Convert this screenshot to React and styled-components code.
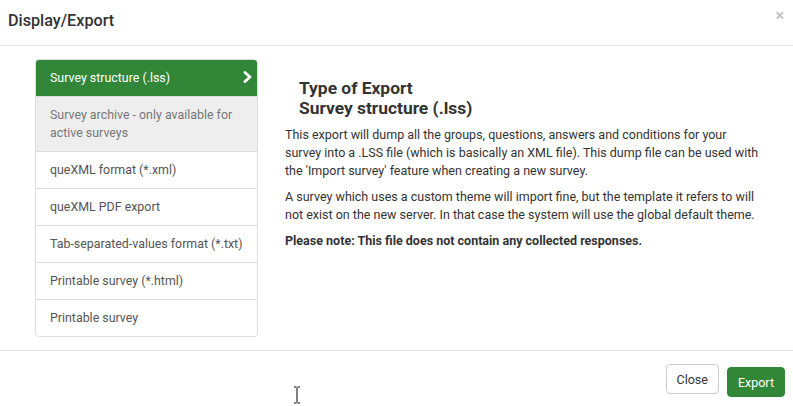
import React from "react";
import styled, { createGlobalStyle } from "styled-components";

const GlobalStyle = createGlobalStyle`
  html, body {
    margin: 0;
    padding: 0;
    background: #fff;
  }
  body {
    font-family: Roboto, "Liberation Sans", Arial, sans-serif;
    color: #333;
  }
`;

const Modal = styled.div`
  position: relative;
  width: 793px;
  height: 406px;
  overflow: hidden;
`;

const Header = styled.div`
  height: 46px;
  box-sizing: border-box;
  border-bottom: 1px solid #e5e5e5;
  display: flex;
  align-items: center;
  justify-content: space-between;
  padding: 0 9px 4px 8px;
`;

const Title = styled.h4`
  margin: 0;
  font-size: 16.2px;
  font-weight: 500;
  color: #333;
`;

const CloseX = styled.span`
  font-size: 16px;
  font-weight: 700;
  color: #c4c4c4;
  line-height: 1;
  margin-top: -9px;
`;

const Body = styled.div`
  display: flex;
  align-items: flex-start;
  padding: 13px 0 13px 35px;
  border-bottom: 1px solid #e5e5e5;
`;

const ExportList = styled.div`
  width: 223px;
  box-sizing: border-box;
  border: 1px solid #ddd;
  border-radius: 4px;
  overflow: hidden;
  flex-shrink: 0;
`;

const ListItem = styled.div`
  display: flex;
  align-items: center;
  justify-content: space-between;
  padding: 9px 14px;
  font-size: 12.4px;
  line-height: 18px;
  border-bottom: ${(p) => (p.$last ? "none" : "1px solid #ddd")};
  background: ${(p) => (p.$active ? "#328637" : p.$disabled ? "#eeeeee" : "#fff")};
  color: ${(p) => (p.$active ? "#fff" : p.$disabled ? "#777" : "#555")};
  margin-top: ${(p) => (p.$active ? "-1px" : "0")};
  padding-top: ${(p) => (p.$active ? "10px" : "9px")};
`;

const Chevron = styled.svg`
  width: 10px;
  height: 12px;
  flex-shrink: 0;
  margin-right: -10px;
  margin-top: -2px;
`;

const Detail = styled.div`
  width: 476px;
  margin-left: 27px;
  font-size: 12.5px;
  line-height: 18px;
  color: #333;
`;

const DetailTitle = styled.h4`
  margin: 19px 0 8px 14px;
  font-size: 17.4px;
  line-height: 20px;
  font-weight: 700;
  color: #333;
`;

const Para = styled.p`
  margin: 0 0 8px;
  font-weight: ${(p) => (p.$strong ? 700 : 400)};
`;

const Footer = styled.div`
  display: flex;
  justify-content: flex-end;
  align-items: flex-start;
  gap: 8px;
  padding: 13px 8px 0 0;
`;

const Button = styled.button`
  font-family: Roboto, "Liberation Sans", Arial, sans-serif;
  font-size: 12.5px;
  height: 30px;
  padding: 0 10px;
  border-radius: 4px;
  margin-top: ${(p) => (p.$primary ? "3px" : "0")};
  border: 1px solid ${(p) => (p.$primary ? "#328637" : "#ccc")};
  background: ${(p) => (p.$primary ? "#328637" : "#fff")};
  color: ${(p) => (p.$primary ? "#fff" : "#333")};
`;

const Cursor = styled.svg`
  position: absolute;
  left: 293px;
  top: 386px;
  width: 8px;
  height: 18px;
`;

const items = [
  { label: "Survey structure (.lss)", active: true },
  { label: "Survey archive - only available for active surveys", disabled: true },
  { label: "queXML format (*.xml)" },
  { label: "queXML PDF export" },
  { label: "Tab-separated-values format (*.txt)" },
  { label: "Printable survey (*.html)" },
  { label: "Printable survey" },
];

export default function App() {
  return (
    <>
      <GlobalStyle />
      <Modal>
        <Header>
          <Title>Display/Export</Title>
          <CloseX>×</CloseX>
        </Header>
        <Body>
          <ExportList>
            {items.map((it, i) => (
              <ListItem
                key={it.label}
                $active={it.active}
                $disabled={it.disabled}
                $last={i === items.length - 1}
              >
                <span>{it.label}</span>
                {it.active && (
                  <Chevron viewBox="0 0 10 12">
                    <polyline
                      points="2,1.5 7,6 2,10.5"
                      fill="none"
                      stroke="#fff"
                      strokeWidth="2.8"
                      strokeLinecap="round"
                      strokeLinejoin="round"
                    />
                  </Chevron>
                )}
              </ListItem>
            ))}
          </ExportList>
          <Detail>
            <DetailTitle>
              Type of Export
              <br />
              Survey structure (.lss)
            </DetailTitle>
            <Para>
              This export will dump all the groups, questions, answers and conditions for your
              survey into a .LSS file (which is basically an XML file). This dump file can be used
              with the 'Import survey' feature when creating a new survey.
            </Para>
            <Para>
              A survey which uses a custom theme will import fine, but the template it refers to
              will not exist on the new server. In that case the system will use the global default
              theme.
            </Para>
            <Para $strong>Please note: This file does not contain any collected responses.</Para>
          </Detail>
        </Body>
        <Footer>
          <Button>Close</Button>
          <Button $primary>Export</Button>
        </Footer>
        <Cursor viewBox="0 0 8 18">
          <path
            d="M1 1h2.5M4.5 1H7M4 1.5v15M1 17h2.5M4.5 17H7"
            stroke="#000"
            strokeWidth="1"
            fill="none"
          />
        </Cursor>
      </Modal>
    </>
  );
}
